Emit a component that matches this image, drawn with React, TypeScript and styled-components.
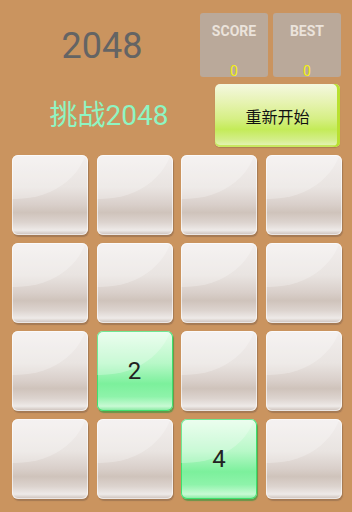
import styled, { createGlobalStyle } from "styled-components";

const GlobalStyle = createGlobalStyle`
  html, body {
    margin: 0;
    padding: 0;
    background: #ca945f;
  }
  body {
    font-family: Roboto, "Noto Sans", "Noto Sans CJK SC", sans-serif;
  }
`;

const Page = styled.div`
  width: 352px;
  height: 512px;
  background: #ca945f;
  box-sizing: border-box;
  padding-top: 13px;
  overflow: hidden;
`;

const Header = styled.div`
  display: grid;
  grid-template-columns: 200px 152px;
  height: 142px;
`;

const LeftCol = styled.div`
  display: flex;
  flex-direction: column;
  align-items: center;
`;

const Title = styled.div`
  font-size: 36px;
  color: #646464;
  margin-top: 13px;
  margin-left: 4px;
  line-height: 40px;
`;

const Subtitle = styled.div`
  font-size: 28px;
  color: #8ef5c2;
  margin-top: 33px;
  margin-left: 18px;
  line-height: 34px;
  font-family: Roboto, "Noto Sans CJK SC", sans-serif;
`;

const RightCol = styled.div`
  display: flex;
  flex-direction: column;
`;

const Scores = styled.div`
  display: flex;
  gap: 5px;
`;

const ScoreBox = styled.div`
  width: 68px;
  height: 64px;
  background: #baa99a;
  border-radius: 3px;
  display: flex;
  flex-direction: column;
  align-items: center;
  justify-content: space-between;
  box-sizing: border-box;
  padding: 10px 0 0;
`;

const ScoreLabel = styled.div`
  font-size: 14px;
  font-weight: bold;
  color: #ebe3db;
  line-height: 16px;
`;

const ScoreValue = styled.div`
  font-size: 14px;
  color: #f4f010;
  line-height: 13px;
  margin-bottom: -1px;
`;

const RestartButton = styled.div`
  margin: 7px 12px 0 15px;
  height: 63px;
  border-radius: 5px;
  background: linear-gradient(
    to bottom,
    #f4f8e0 0%,
    #e6f3b0 30%,
    #d6ef85 55%,
    #c4eb58 72%,
    #d3ee88 88%,
    #e8f5c0 100%
  );
  box-shadow: inset -3px 0 0 #b9e030, inset 0 -2px 0 #c8e860, 0 1px 1px rgba(0,0,0,0.15);
  display: flex;
  align-items: center;
  justify-content: center;
  font-size: 16px;
  color: #111;
  font-family: "Noto Sans CJK SC", sans-serif;
`;

const Board = styled.div`
  display: grid;
  grid-template-columns: repeat(4, 76px);
  grid-auto-rows: 80px;
  column-gap: 8.5px;
  row-gap: 8px;
  padding-left: 12px;
`;

const Tile = styled.div<{ $green?: boolean }>`
  position: relative;
  border-radius: 6px;
  overflow: hidden;
  display: flex;
  align-items: center;
  justify-content: center;
  font-size: 24px;
  color: #222;
  font-family: Roboto, "Liberation Sans", sans-serif;
  background: ${(p) =>
    p.$green
      ? "linear-gradient(to bottom, #e6fdea 0%, #b8f8c8 40%, #7cf09c 66%, #8ef3aa 82%, #c8fad4 94%, #7ee89a 100%)"
      : "linear-gradient(to bottom, #f2eeed 0%, #e9e4e1 40%, #d9cfca 62%, #cfc3bb 72%, #dcd3ce 84%, #eeeae8 94%, #c9bdb6 100%)"};
  box-shadow: ${(p) =>
    p.$green
      ? "inset 0 0 0 1px #3fe06f, 1px 2px 1px rgba(40,150,60,0.6)"
      : "inset 0 0 0 1px rgba(255,255,255,0.6), 1px 2px 1px rgba(120,90,70,0.45)"};
  &::before {
    content: "";
    position: absolute;
    left: -90%;
    top: -95%;
    width: 190%;
    height: 150%;
    border-radius: 50%;
    background: rgba(255, 255, 255, 0.25);
  }
  span {
    position: relative;
  }
`;

const cells = [
  0, 0, 0, 0,
  0, 0, 0, 0,
  0, 2, 0, 0,
  0, 0, 4, 0,
];

export default function App() {
  return (
    <>
      <GlobalStyle />
      <Page>
        <Header>
          <LeftCol>
            <Title>2048</Title>
            <Subtitle>挑战2048</Subtitle>
          </LeftCol>
          <RightCol>
            <Scores>
              <ScoreBox>
                <ScoreLabel>SCORE</ScoreLabel>
                <ScoreValue>0</ScoreValue>
              </ScoreBox>
              <ScoreBox>
                <ScoreLabel>BEST</ScoreLabel>
                <ScoreValue>0</ScoreValue>
              </ScoreBox>
            </Scores>
            <RestartButton>重新开始</RestartButton>
          </RightCol>
        </Header>
        <Board>
          {cells.map((v, i) => (
            <Tile key={i} $green={v > 0}>
              {v > 0 && <span>{v}</span>}
            </Tile>
          ))}
        </Board>
      </Page>
    </>
  );
}
